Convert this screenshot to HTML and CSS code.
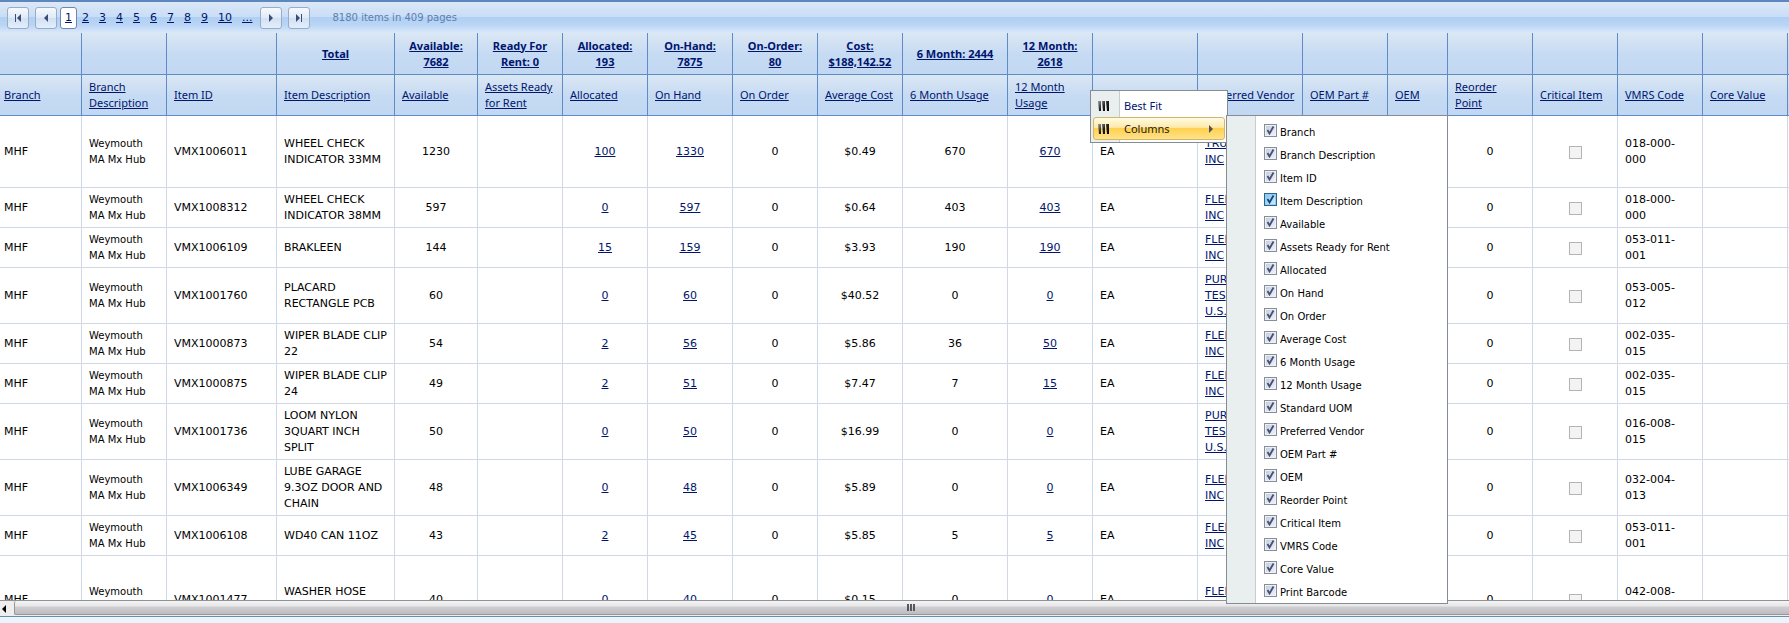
FILE: index.html
```html
<!DOCTYPE html>
<html lang="en">
<head>
<meta charset="utf-8">
<title>Inventory Items</title>
<link rel="stylesheet" href="styles.css">
</head>
<body>
<main class="grid">
  <nav class="pager" aria-label="Pages">
    <button class="pager-btn" type="button" aria-label="First page"><svg width="8" height="8" viewBox="0 0 8 8"><path d="M1 0h1v8H1zM7 0v8L3 4z"/></svg></button>
    <button class="pager-btn" type="button" aria-label="Previous page"><svg width="8" height="8" viewBox="0 0 8 8"><path d="M6 0v8L2 4z"/></svg></button>
    <div class="pages">
      <a class="current" href="#p1" aria-current="page">1</a><a href="#p2">2</a><a href="#p3">3</a><a href="#p4">4</a><a href="#p5">5</a><a href="#p6">6</a><a href="#p7">7</a><a href="#p8">8</a><a href="#p9">9</a><a href="#p10">10</a><a href="#more">...</a>
    </div>
    <button class="pager-btn" type="button" aria-label="Next page"><svg width="8" height="8" viewBox="0 0 8 8"><path d="M2 0v8l4-4z"/></svg></button>
    <button class="pager-btn" type="button" aria-label="Last page"><svg width="8" height="8" viewBox="0 0 8 8"><path d="M1 0v8l4-4zM6 0h1v8H6z"/></svg></button>
    <span class="pager-info">8180 items in 409 pages</span>
  </nav>

  <div class="grid-view">
    <table class="items">
      <colgroup>
        <col class="w82"><col class="w85"><col class="w110"><col class="w118"><col class="w83"><col class="w85"><col class="w85"><col class="w85"><col class="w85"><col class="w85"><col class="w105"><col class="w85"><col class="w105"><col class="w105"><col class="w85"><col class="w60"><col class="w85"><col class="w85"><col class="w85"><col class="w85"><col class="w85">
      </colgroup>
      <thead>
        <tr class="totals">
          <th></th><th></th><th></th>
          <th><a href="#t">Total</a></th>
          <th><a href="#t">Available:<br>7682</a></th>
          <th><a href="#t">Ready For<br>Rent: 0</a></th>
          <th><a href="#t">Allocated:<br>193</a></th>
          <th><a href="#t">On-Hand:<br>7875</a></th>
          <th><a href="#t">On-Order:<br>80</a></th>
          <th><a href="#t">Cost:<br>$188,142.52</a></th>
          <th><a href="#t">6 Month: 2444</a></th>
          <th><a href="#t">12 Month:<br>2618</a></th>
          <th></th><th></th><th></th><th></th><th></th><th></th><th></th><th></th><th></th>
        </tr>
        <tr class="names">
          <th><a href="#s">Branch</a></th>
          <th><a href="#s">Branch<br>Description</a></th>
          <th><a href="#s">Item ID</a></th>
          <th><a href="#s">Item Description</a></th>
          <th><a href="#s">Available</a></th>
          <th><a href="#s">Assets Ready<br>for Rent</a></th>
          <th><a href="#s">Allocated</a></th>
          <th><a href="#s">On Hand</a></th>
          <th><a href="#s">On Order</a></th>
          <th><a href="#s">Average Cost</a></th>
          <th><a href="#s">6 Month Usage</a></th>
          <th><a href="#s">12 Month<br>Usage</a></th>
          <th></th>
          <th><a href="#s">Preferred Vendor</a></th>
          <th><a href="#s">OEM Part #</a></th>
          <th><a href="#s">OEM</a></th>
          <th><a href="#s">Reorder<br>Point</a></th>
          <th><a href="#s">Critical Item</a></th>
          <th><a href="#s">VMRS Code</a></th>
          <th><a href="#s">Core Value</a></th>
          <th></th>
        </tr>
      </thead>
      <tbody>
        <tr class="lines-4"><td>MHF</td><td>Weymouth MA Mx Hub</td><td>VMX1006011</td><td>WHEEL CHECK INDICATOR 33MM</td><td>1230</td><td></td><td><a href="#d">100</a></td><td><a href="#d">1330</a></td><td>0</td><td>$0.49</td><td>670</td><td><a href="#d">670</a></td><td>EA</td><td><a href="#v">TRUCKPRO<br>INC</a></td><td></td><td></td><td>0</td><td><input type="checkbox" disabled aria-label="Critical item"></td><td>018-000-000</td><td></td><td></td></tr>
        <tr><td>MHF</td><td>Weymouth MA Mx Hub</td><td>VMX1008312</td><td>WHEEL CHECK INDICATOR 38MM</td><td>597</td><td></td><td><a href="#d">0</a></td><td><a href="#d">597</a></td><td>0</td><td>$0.64</td><td>403</td><td><a href="#d">403</a></td><td>EA</td><td><a href="#v">FLEETPRIDE<br>INC</a></td><td></td><td></td><td>0</td><td><input type="checkbox" disabled aria-label="Critical item"></td><td>018-000-000</td><td></td><td></td></tr>
        <tr><td>MHF</td><td>Weymouth MA Mx Hub</td><td>VMX1006109</td><td>BRAKLEEN</td><td>144</td><td></td><td><a href="#d">15</a></td><td><a href="#d">159</a></td><td>0</td><td>$3.93</td><td>190</td><td><a href="#d">190</a></td><td>EA</td><td><a href="#v">FLEETPRIDE<br>INC</a></td><td></td><td></td><td>0</td><td><input type="checkbox" disabled aria-label="Critical item"></td><td>053-011-001</td><td></td><td></td></tr>
        <tr><td>MHF</td><td>Weymouth MA Mx Hub</td><td>VMX1001760</td><td>PLACARD RECTANGLE PCB</td><td>60</td><td></td><td><a href="#d">0</a></td><td><a href="#d">60</a></td><td>0</td><td>$40.52</td><td>0</td><td><a href="#d">0</a></td><td>EA</td><td><a href="#v">PUR<br>TES<br>U.S.</a></td><td></td><td></td><td>0</td><td><input type="checkbox" disabled aria-label="Critical item"></td><td>053-005-012</td><td></td><td></td></tr>
        <tr><td>MHF</td><td>Weymouth MA Mx Hub</td><td>VMX1000873</td><td>WIPER BLADE CLIP 22</td><td>54</td><td></td><td><a href="#d">2</a></td><td><a href="#d">56</a></td><td>0</td><td>$5.86</td><td>36</td><td><a href="#d">50</a></td><td>EA</td><td><a href="#v">FLEETPRIDE<br>INC</a></td><td></td><td></td><td>0</td><td><input type="checkbox" disabled aria-label="Critical item"></td><td>002-035-015</td><td></td><td></td></tr>
        <tr><td>MHF</td><td>Weymouth MA Mx Hub</td><td>VMX1000875</td><td>WIPER BLADE CLIP 24</td><td>49</td><td></td><td><a href="#d">2</a></td><td><a href="#d">51</a></td><td>0</td><td>$7.47</td><td>7</td><td><a href="#d">15</a></td><td>EA</td><td><a href="#v">FLEETPRIDE<br>INC</a></td><td></td><td></td><td>0</td><td><input type="checkbox" disabled aria-label="Critical item"></td><td>002-035-015</td><td></td><td></td></tr>
        <tr><td>MHF</td><td>Weymouth MA Mx Hub</td><td>VMX1001736</td><td>LOOM NYLON 3QUART INCH SPLIT</td><td>50</td><td></td><td><a href="#d">0</a></td><td><a href="#d">50</a></td><td>0</td><td>$16.99</td><td>0</td><td><a href="#d">0</a></td><td>EA</td><td><a href="#v">PUR<br>TES<br>U.S.</a></td><td></td><td></td><td>0</td><td><input type="checkbox" disabled aria-label="Critical item"></td><td>016-008-015</td><td></td><td></td></tr>
        <tr><td>MHF</td><td>Weymouth MA Mx Hub</td><td>VMX1006349</td><td>LUBE GARAGE 9.3OZ DOOR AND CHAIN</td><td>48</td><td></td><td><a href="#d">0</a></td><td><a href="#d">48</a></td><td>0</td><td>$5.89</td><td>0</td><td><a href="#d">0</a></td><td>EA</td><td><a href="#v">FLEETPRIDE<br>INC</a></td><td></td><td></td><td>0</td><td><input type="checkbox" disabled aria-label="Critical item"></td><td>032-004-013</td><td></td><td></td></tr>
        <tr><td>MHF</td><td>Weymouth MA Mx Hub</td><td>VMX1006108</td><td>WD40 CAN 11OZ</td><td>43</td><td></td><td><a href="#d">2</a></td><td><a href="#d">45</a></td><td>0</td><td>$5.85</td><td>5</td><td><a href="#d">5</a></td><td>EA</td><td><a href="#v">FLEETPRIDE<br>INC</a></td><td></td><td></td><td>0</td><td><input type="checkbox" disabled aria-label="Critical item"></td><td>053-011-001</td><td></td><td></td></tr>
        <tr class="lines-5"><td>MHF</td><td>Weymouth MA Mx Hub</td><td>VMX1001477</td><td>WASHER HOSE<br>KIT</td><td>40</td><td></td><td><a href="#d">0</a></td><td><a href="#d">40</a></td><td>0</td><td>$0.15</td><td>0</td><td><a href="#d">0</a></td><td>EA</td><td><a href="#v">FLEETPRIDE<br>INC</a></td><td></td><td></td><td>0</td><td><input type="checkbox" disabled aria-label="Critical item"></td><td>042-008-001</td><td></td><td></td></tr>
      </tbody>
    </table>
  </div>

  <div class="scrollbar">
    <button class="scroll-arrow" type="button" aria-label="Scroll left"><svg width="4" height="8" viewBox="0 0 4 8"><path d="M4 0v8L0 4z"/></svg></button>
    <div class="scroll-thumb"><span class="grip"></span></div>
  </div>

  <div class="menu context-menu" role="menu">
    <button class="menu-item" type="button" role="menuitem"><svg class="bars" width="12" height="12" viewBox="0 0 12 12"><defs><linearGradient id="bar" x1="0" y1="0" x2="1" y2="1"><stop offset="0" stop-color="#999"/><stop offset=".5" stop-color="#222"/><stop offset="1" stop-color="#000"/></linearGradient></defs><path fill="url(#bar)" d="M0 1h3v10H1zM4 1h3v10H5zM8 1h3v10H9z"/></svg>Best Fit</button>
    <button class="menu-item active" type="button" role="menuitem"><svg class="bars" width="12" height="12" viewBox="0 0 12 12"><path fill="url(#bar)" d="M0 1h3v10H1zM4 1h3v10H5zM8 1h3v10H9z"/></svg>Columns<svg class="more" width="4" height="8" viewBox="0 0 4 8"><path d="M0 0v8l4-4z"/></svg></button>
  </div>

  <div class="menu columns-menu">
    <label><input type="checkbox" checked>Branch</label>
    <label><input type="checkbox" checked>Branch Description</label>
    <label><input type="checkbox" checked>Item ID</label>
    <label><input class="hot" type="checkbox" checked>Item Description</label>
    <label><input type="checkbox" checked>Available</label>
    <label><input type="checkbox" checked>Assets Ready for Rent</label>
    <label><input type="checkbox" checked>Allocated</label>
    <label><input type="checkbox" checked>On Hand</label>
    <label><input type="checkbox" checked>On Order</label>
    <label><input type="checkbox" checked>Average Cost</label>
    <label><input type="checkbox" checked>6 Month Usage</label>
    <label><input type="checkbox" checked>12 Month Usage</label>
    <label><input type="checkbox" checked>Standard UOM</label>
    <label><input type="checkbox" checked>Preferred Vendor</label>
    <label><input type="checkbox" checked>OEM Part #</label>
    <label><input type="checkbox" checked>OEM</label>
    <label><input type="checkbox" checked>Reorder Point</label>
    <label><input type="checkbox" checked>Critical Item</label>
    <label><input type="checkbox" checked>VMRS Code</label>
    <label><input type="checkbox" checked>Core Value</label>
    <label><input type="checkbox" checked>Print Barcode</label>
  </div>
</main>
</body>
</html>
```
FILE: styles.css
```css
* { box-sizing: border-box; }

body {
  margin: 0;
  background: #e9f4fd;
  color: #000;
  font: 11px/16px Verdana, "DejaVu Sans", sans-serif;
}

button { font: inherit; color: inherit; }
a { color: #00156e; }

.grid {
  position: relative;
  display: flex;
  flex-direction: column;
  height: calc(100vh - 6px);
  overflow: hidden;
  border-top: 2px solid #5d87bf;
  border-bottom: 1px solid #6f8ba6;
}

/* Pager */
.pager {
  flex: none;
  display: flex;
  align-items: center;
  height: 31px;
  padding-left: 7px;
  background: linear-gradient(#dce8f6 0, #c8ddf7 15px, #b0cff3 15px, #b9d5f5 23px, #dbe9fa 31px);
}

.pager-btn {
  display: flex;
  align-items: center;
  justify-content: center;
  width: 22px;
  height: 22px;
  margin-right: 6px;
  padding: 0;
  border: 1px solid #9aabc4;
  border-radius: 3px;
  background: linear-gradient(#f5f9fd, #dfeaf7 50%, #d0e0f4 50%, #e3eefb);
}

.pager-btn svg { fill: #3f4b73; }
.pages { display: flex; margin: 0 2px 0 -3px; }
.pages a { padding: 3px 5px; }

.pages .current {
  padding: 2px 4px;
  border: 1px solid #7087ad;
  border-radius: 3px;
  background: #fff;
}

.pager-info { margin-left: 17px; color: #5a7fb0; font-size: 10px; }

/* Grid */
.grid-view { flex: 1; min-height: 0; overflow: hidden; background: #fff; }

.items {
  width: 1873px;
  table-layout: fixed;
  border-collapse: separate;
  border-spacing: 0;
}

.w60 { width: 60px; }
.w82 { width: 82px; }
.w83 { width: 83px; }
.w85 { width: 85px; }
.w105 { width: 105px; }
.w110 { width: 110px; }
.w118 { width: 118px; }

.items th {
  height: 41px;
  padding: 0 0 0 7px;
  border: solid #5d8cc9;
  border-width: 0 1px 1px 0;
  background: linear-gradient(#dbe7f4, #c5daf3 55%, #c2d8f2);
  font: 11px/16px "Segoe UI", "Noto Sans", sans-serif;
  text-align: left;
  white-space: nowrap;
}

.items .totals th { height: 42px; padding: 0; font-weight: bold; text-align: center; }

.items td {
  height: 40px;
  padding: 4px 7px 3px;
  border: solid #d0d7e5;
  border-width: 0 1px 1px 0;
}

.items td:first-child, .items .names th:first-child { padding-left: 4px; }
.items td:nth-child(2) { font-size: 10px; }
.items td:nth-child(n+5):nth-child(-n+12),
.items td:nth-child(17), .items td:nth-child(18) { text-align: center; }
.items .lines-4 td { height: 72px; }
.items .lines-5 td { height: 88px; }

.items input {
  display: block;
  appearance: none;
  width: 13px;
  height: 13px;
  margin: 0 auto;
  border: 1px solid #b4b4b4;
  background: #f3f3f3;
}

/* Horizontal scrollbar */
.scrollbar {
  flex: none;
  display: flex;
  height: 16px;
  overflow: hidden;
  border-top: 1px solid #8f9296;
  background: #eee;
}

.scroll-arrow {
  width: 14px;
  padding: 0 0 0 2px;
  border: 0;
  background: none;
}

.scroll-arrow svg { display: block; }

.scroll-thumb {
  flex: 1;
  display: flex;
  align-items: center;
  justify-content: center;
  height: 14px;
  margin-right: -18px;
  border: solid #979797;
  border-width: 0 0 1px 1px;
  border-radius: 2px 0 0 2px;
  background: linear-gradient(#f4f4f4, #e6e6e8 40%, #cfcfd3 45%, #bcbcc2);
}

.grip {
  width: 8px;
  height: 7px;
  background: repeating-linear-gradient(90deg, #55585f 0 2px, transparent 2px 3px);
}

/* Menus */
.menu {
  position: absolute;
  border: 1px solid #868c94;
  background: linear-gradient(90deg, #e9eeee 28px, #c5cdd1 28px, #c5cdd1 29px, #fff 29px);
}

.context-menu {
  top: 88px;
  left: 1090px;
  width: 138px;
  padding: 3px 2px 2px;
}

.menu-item {
  display: flex;
  align-items: center;
  width: 100%;
  height: 23px;
  padding: 0 11px 0 4px;
  border: 1px solid transparent;
  border-radius: 3px;
  background: none;
  color: #00156e;
  font: 11px/16px "Segoe UI", "Noto Sans", sans-serif;
}

.menu-item.active {
  border-color: #d2b668;
  background: linear-gradient(#fffbe6, #ffe9a6 45%, #ffd04d 48%, #ffe28a);
  color: #222;
}

.bars { margin-right: 14px; }
.more { margin-left: auto; fill: #4c535c; }

.columns-menu {
  top: 113px;
  left: 1226px;
  width: 222px;
  padding: 4px 0 0 37px;
  font-size: 10px;
}

.columns-menu label {
  display: flex;
  align-items: center;
  gap: 3px;
  height: 23px;
  padding-top: 2px;
}

.columns-menu input {
  appearance: none;
  width: 13px;
  height: 13px;
  margin: 0 0 4px;
  border: 1px solid #858f9c;
  background:
    url("data:image/svg+xml,%3Csvg xmlns='http://www.w3.org/2000/svg' viewBox='0 0 11 11'%3E%3Cpath d='M2.5 5L4.5 8.5L8.5 1.5' fill='none' stroke='%23444f80' stroke-width='1.8'/%3E%3C/svg%3E"),
    linear-gradient(135deg, #c4cbd6, #f2f4f7);
  box-shadow: inset 0 0 0 1px #eef0f3;
}

.columns-menu .hot {
  border-color: #2c628b;
  background:
    url("data:image/svg+xml,%3Csvg xmlns='http://www.w3.org/2000/svg' viewBox='0 0 11 11'%3E%3Cpath d='M2.5 5L4.5 8.5L8.5 1.5' fill='none' stroke='%23203f80' stroke-width='1.8'/%3E%3C/svg%3E"),
    linear-gradient(135deg, #7cc4ee, #d5effc);
  box-shadow: inset 0 0 0 1px #8fd0f2;
}
```
